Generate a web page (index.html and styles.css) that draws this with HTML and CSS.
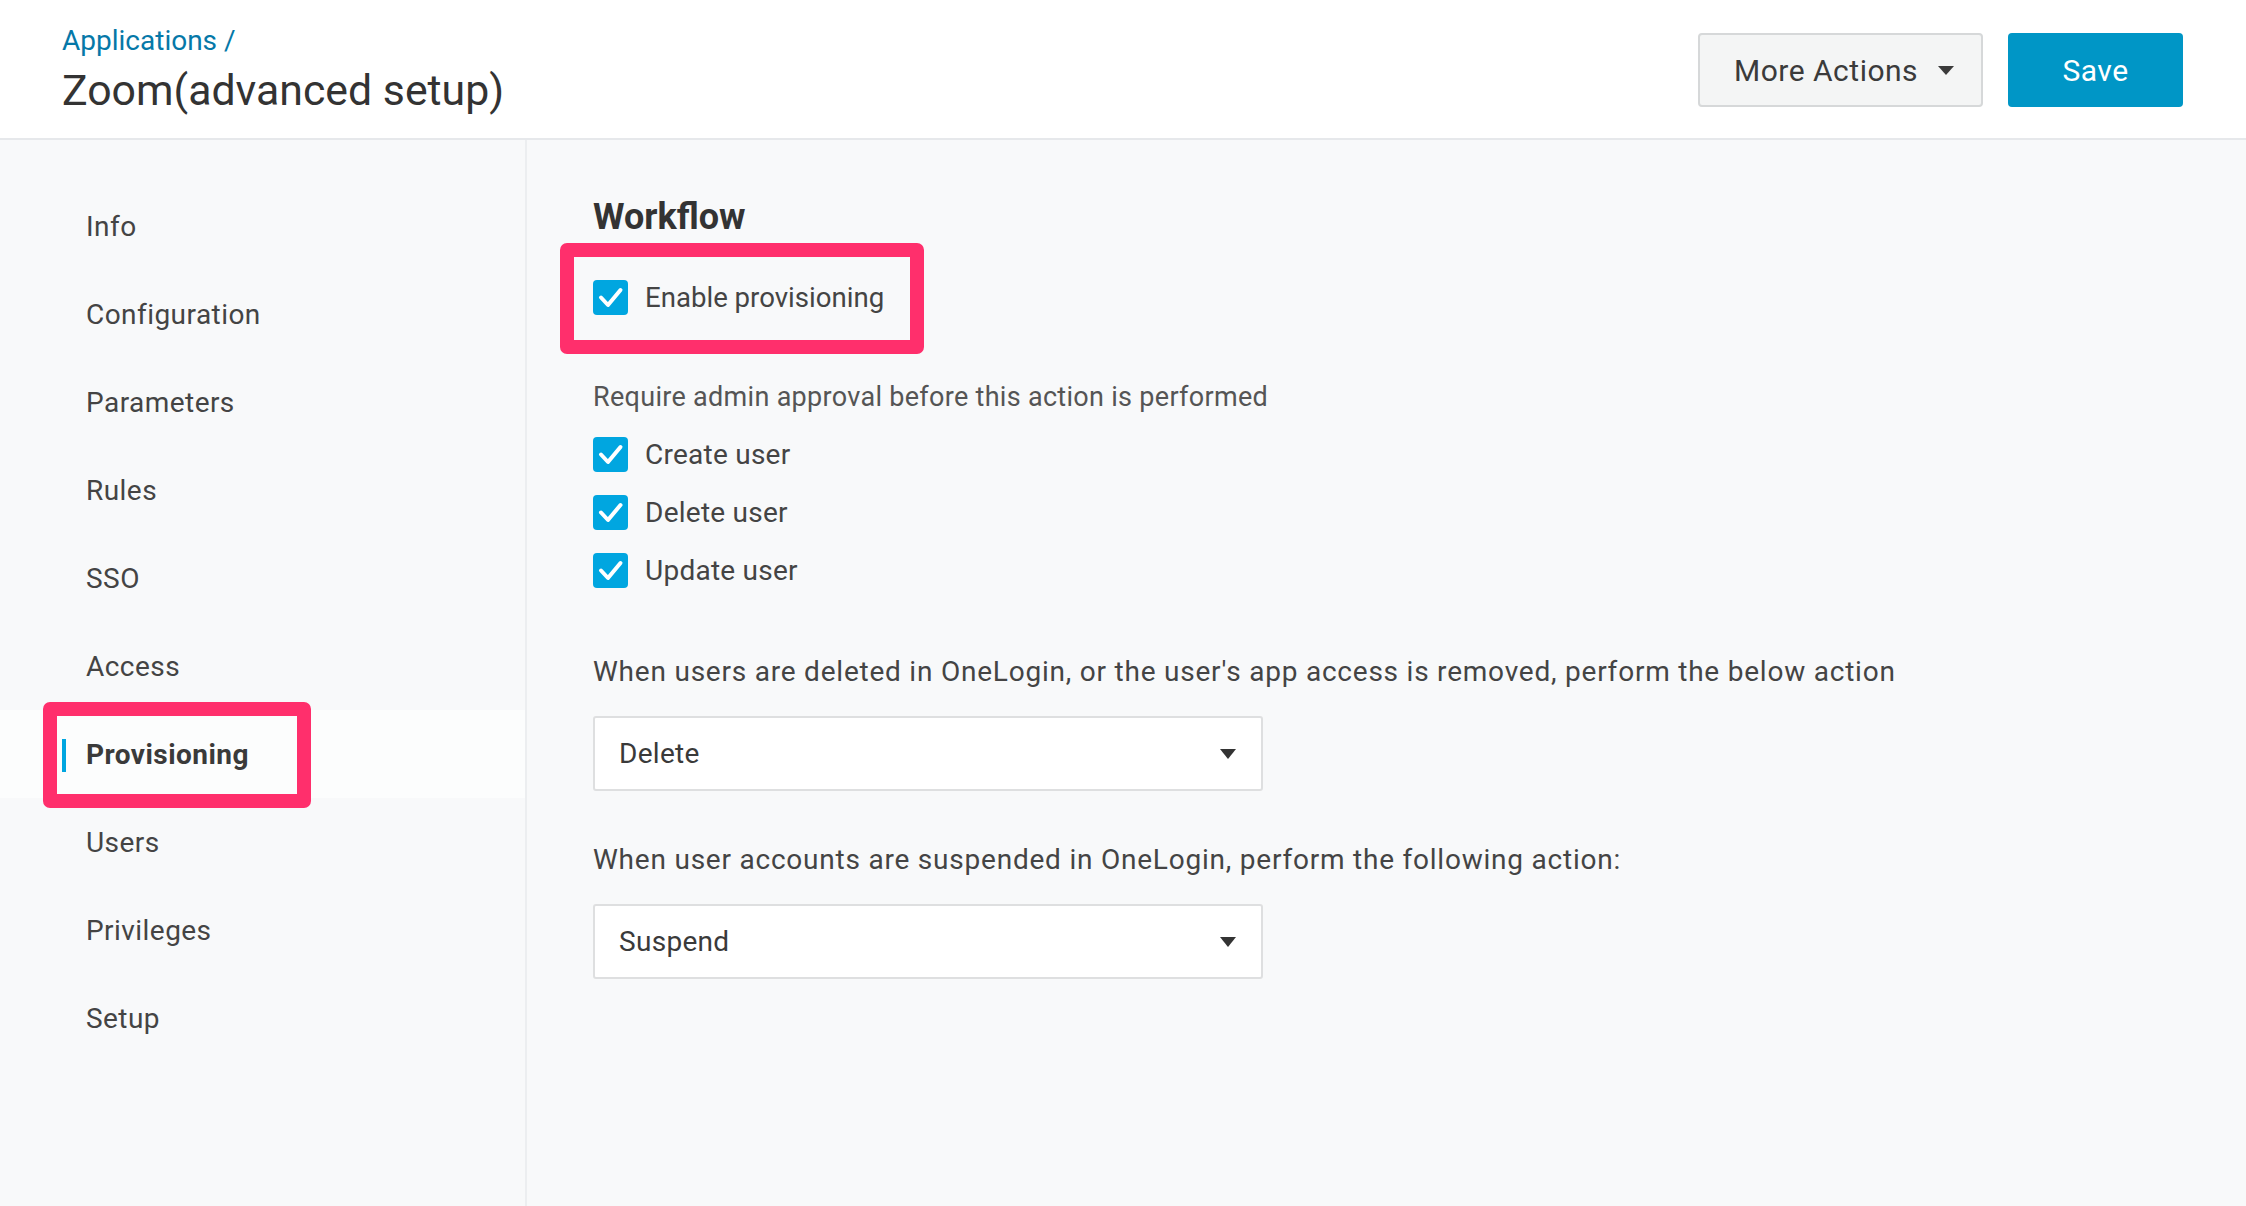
FILE: index.html
```html
<!DOCTYPE html>
<html>
<head>
  <title>Zoom(advanced setup) - Provisioning</title>
  <link rel="stylesheet" href="styles.css">
</head>
<body>
  <div id="header">
    <div class="titles">
      <a class="crumb" href="#">Applications /</a>
      <h1>Zoom(advanced setup)</h1>
    </div>
    <div class="actions">
      <button class="btn-more">More Actions <span class="caret"></span></button>
      <button class="btn-save">Save</button>
    </div>
  </div>

  <div id="page">
    <ul class="sidenav">
      <li>Info</li>
      <li>Configuration</li>
      <li>Parameters</li>
      <li>Rules</li>
      <li>SSO</li>
      <li>Access</li>
      <li class="active"><span class="highlight"></span>Provisioning</li>
      <li>Users</li>
      <li>Privileges</li>
      <li>Setup</li>
    </ul>

    <div class="main">
      <h2>Workflow</h2>

      <div class="check enable">
        <span class="highlight"></span>
        <span class="box"><svg width="35" height="35" viewBox="0 0 35 35"><path d="M8 17.5 L15 25 L27.5 10" fill="none" stroke="#fff" stroke-width="4" stroke-linecap="round" stroke-linejoin="round"/></svg></span>
        Enable provisioning
      </div>

      <p class="note">Require admin approval before this action is performed</p>

      <div class="checklist">
        <div class="check">
          <span class="box"><svg width="35" height="35" viewBox="0 0 35 35"><path d="M8 17.5 L15 25 L27.5 10" fill="none" stroke="#fff" stroke-width="4" stroke-linecap="round" stroke-linejoin="round"/></svg></span>
          Create user
        </div>
        <div class="check">
          <span class="box"><svg width="35" height="35" viewBox="0 0 35 35"><path d="M8 17.5 L15 25 L27.5 10" fill="none" stroke="#fff" stroke-width="4" stroke-linecap="round" stroke-linejoin="round"/></svg></span>
          Delete user
        </div>
        <div class="check">
          <span class="box"><svg width="35" height="35" viewBox="0 0 35 35"><path d="M8 17.5 L15 25 L27.5 10" fill="none" stroke="#fff" stroke-width="4" stroke-linecap="round" stroke-linejoin="round"/></svg></span>
          Update user
        </div>
      </div>

      <p class="label first">When users are deleted in OneLogin, or the user's app access is removed, perform the below action</p>
      <div class="select">Delete <span class="caret"></span></div>

      <p class="label">When user accounts are suspended in OneLogin, perform the following action:</p>
      <div class="select">Suspend <span class="caret"></span></div>
    </div>
  </div>
</body>
</html>
```

FILE: styles.css
```css
body {
  margin: 0;
  font-family: Roboto, "Liberation Sans", sans-serif;
  color: #3d3d3d;
  background: #f8f9fa;
}

#header {
  display: flex;
  justify-content: space-between;
  align-items: flex-start;
  height: 140px;
  box-sizing: border-box;
  background: #fff;
  border-bottom: 2px solid #e6e8eb;
  padding: 0 63px 0 62px;
}

.titles {
  padding-top: 23px;
}

.crumb {
  display: block;
  font-size: 28px;
  line-height: 36px;
  color: #0578a8;
  text-decoration: none;
}

h1 {
  margin: 4px 0 0;
  font-size: 42.8px;
  font-weight: 400;
  line-height: 54px;
  color: #333;
}

.actions {
  display: flex;
  gap: 25px;
  margin-top: 33px;
}

button {
  font-family: Roboto, "Liberation Sans", sans-serif;
  font-size: 30px;
  letter-spacing: 0.5px;
  height: 74px;
  border-radius: 4px;
  cursor: pointer;
}

.btn-more {
  display: flex;
  align-items: center;
  width: 285px;
  padding: 0 0 0 34px;
  background: #f4f5f5;
  border: 2px solid #d6d8d9;
  color: #3b3b3b;
}

.btn-more .caret {
  margin-left: 20px;
  border-left: 8px solid transparent;
  border-right: 8px solid transparent;
  border-top: 9px solid #3b3b3b;
}

.btn-save {
  width: 175px;
  background: #0096c6;
  border: none;
  color: #fff;
}

#page {
  display: flex;
  min-height: calc(100vh - 140px);
}

.sidenav {
  list-style: none;
  margin: 0;
  padding: 42px 0 0;
  width: 525px;
  border-right: 2px solid #eceef0;
}

.sidenav li {
  position: relative;
  display: flex;
  align-items: center;
  height: 88px;
  padding-left: 86px;
  font-size: 28px;
  letter-spacing: 0.45px;
  color: #444;
}

.sidenav li.active {
  font-weight: 700;
  color: #3a3a3a;
  background: #fcfdfd;
}

.sidenav li.active::before {
  content: "";
  position: absolute;
  left: 62px;
  top: 29px;
  width: 4px;
  height: 33px;
  background: #00a6e0;
}

.highlight {
  position: absolute;
  box-sizing: border-box;
  border: 14px solid #ff2f6c;
  border-radius: 7px;
}

.sidenav .highlight {
  left: 43px;
  top: -8px;
  width: 268px;
  height: 106px;
}

.main {
  flex: 1;
  padding: 55px 0 0 66px;
}

h2 {
  margin: 0;
  font-size: 36px;
  line-height: 44px;
  font-weight: 700;
  color: #333;
}

.check {
  position: relative;
  display: flex;
  align-items: center;
  gap: 17px;
  height: 40px;
  font-size: 28px;
  letter-spacing: 0.25px;
  color: #444;
}

.check.enable {
  margin-top: 38px;
  width: 300px;
  font-size: 27.6px;
  letter-spacing: 0;
}

.check.enable .highlight {
  left: -33px;
  top: -34px;
  width: 364px;
  height: 111px;
}

.box {
  display: block;
  width: 35px;
  height: 35px;
  border-radius: 4px;
  background: #00a6e0;
}

.box svg {
  display: block;
}

.note {
  margin: 62px 0 0;
  font-size: 27px;
  line-height: 36px;
  letter-spacing: 0.3px;
  color: #555;
}

.checklist {
  display: flex;
  flex-direction: column;
  gap: 18px;
  margin-top: 19px;
}

.label {
  margin: 51px 0 0;
  font-size: 28px;
  line-height: 36px;
  letter-spacing: 0.78px;
  color: #444;
}

.label.first {
  margin-top: 64px;
}

.select {
  display: flex;
  align-items: center;
  justify-content: space-between;
  box-sizing: border-box;
  width: 670px;
  height: 75px;
  margin-top: 26px;
  padding: 0 25px 0 24px;
  background: #fff;
  border: 2px solid #dedfe0;
  border-radius: 3px;
  font-size: 28px;
  letter-spacing: 0.3px;
  color: #3a3a3a;
}

.select .caret {
  border-left: 8px solid transparent;
  border-right: 8px solid transparent;
  border-top: 10px solid #333;
}
```
